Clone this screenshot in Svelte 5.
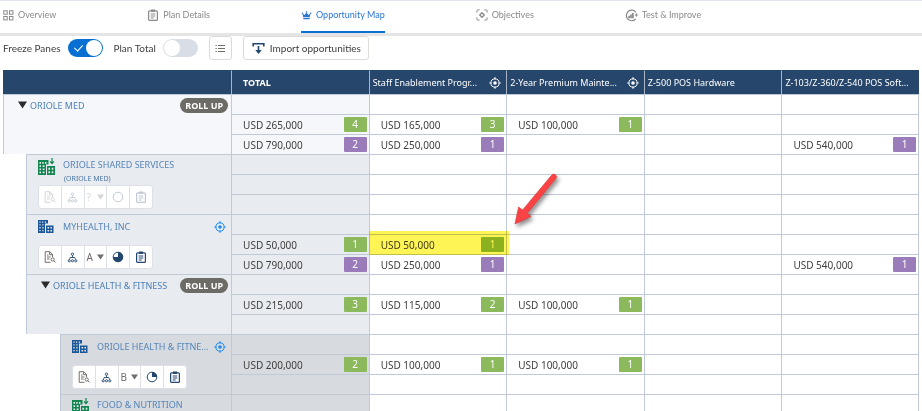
<script>
  const tabs = [
    { label: 'Overview', icon: 'grid' },
    { label: 'Plan Details', icon: 'clipboard' },
    { label: 'Opportunity Map', icon: 'crown', active: true },
    { label: 'Objectives', icon: 'focus' },
    { label: 'Test & Improve', icon: 'chart' }
  ];

  const columns = [
    { label: 'Staff Enablement Progr...', target: true },
    { label: '2-Year Premium Mainte...', target: true },
    { label: 'Z-500 POS Hardware' },
    { label: 'Z-103/Z-360/Z-540 POS Soft...' }
  ];

  const G = 'green';
  const P = 'purple';
  const none = [null, null, null, null, null];

  // Every account spans three rows; each row holds [amount, count, colour] per column.
  const groups = [
    {
      level: 0, name: 'ORIOLE MED', rollup: true,
      rows: [
        none,
        [['265,000', 4, G], ['165,000', 3, G], ['100,000', 1, G], null, null],
        [['790,000', 2, P], ['250,000', 1, P], null, null, ['540,000', 1, P]]
      ]
    },
    {
      level: 1, name: 'ORIOLE SHARED SERVICES', sub: '(ORIOLE MED)', shared: true,
      disabled: true, grade: '?', pie: 0, rows: [none, none, none]
    },
    {
      level: 1, name: 'MYHEALTH, INC', target: true, grade: 'A', pie: 75,
      rows: [
        none,
        [['50,000', 1, G], ['50,000', 1, G, true], null, null, null],
        [['790,000', 2, P], ['250,000', 1, P], null, null, ['540,000', 1, P]]
      ]
    },
    {
      level: 1, name: 'ORIOLE HEALTH & FITNESS', rollup: true,
      rows: [
        none,
        [['215,000', 3, G], ['115,000', 2, G], ['100,000', 1, G], null, null],
        none
      ]
    },
    {
      level: 2, name: 'ORIOLE HEALTH & FITNE...', target: true, grade: 'B', pie: 25,
      rows: [
        none,
        [['200,000', 2, G], ['100,000', 1, G], ['100,000', 1, G], null, null],
        none
      ]
    },
    {
      level: 2, name: 'FOOD & NUTRITION', sub: ' ', shared: true,
      grade: '?', pie: 0, rows: [none, none, none]
    }
  ];
</script>

{#snippet clipboard(size)}
  <svg width={size} height={size} viewBox="0 0 12 12" fill="none" stroke="currentColor" stroke-width="1.2">
    <rect x="1.6" y="1.8" width="8.8" height="9.6" rx="1" />
    <rect x="4" y="0.5" width="4" height="2.4" fill="currentColor" stroke="none" />
    <path d="M3.7 5h4.6M3.7 7h4.6M3.7 9h3" stroke-width="1" />
  </svg>
{/snippet}

{#snippet target()}
  <svg width="12" height="12" viewBox="0 0 12 12" fill="none" stroke="currentColor">
    <circle cx="6" cy="6" r="4.1" />
    <circle cx="6" cy="6" r="1.8" fill="currentColor" stroke="none" />
    <path d="M6 .3v2M6 9.7v2M.3 6h2M9.7 6h2" stroke-width="1.2" />
  </svg>
{/snippet}

{#snippet tabIcon(name)}
  {#if name === 'grid'}
    <svg width="11" height="11" viewBox="0 0 11 11" fill="none" stroke="currentColor">
      <rect x=".8" y=".8" width="3.4" height="3.4" /><rect x="6.5" y=".8" width="3.4" height="3.4" />
      <rect x=".8" y="6.5" width="3.4" height="3.4" /><rect x="6.5" y="6.5" width="3.4" height="3.4" />
    </svg>
  {:else if name === 'clipboard'}
    {@render clipboard(12)}
  {:else if name === 'crown'}
    <svg width="11" height="11" viewBox="0 0 11 11" fill="currentColor">
      <path d="M1.5 3.4 3.7 5 5.5 2.2 7.3 5 9.5 3.4 8.8 7.3H2.2zM2.3 8h6.4v1.3H2.3z" />
      <circle cx="1.4" cy="3.2" r=".8" /><circle cx="5.5" cy="2" r=".8" /><circle cx="9.6" cy="3.2" r=".8" />
    </svg>
  {:else if name === 'focus'}
    <svg width="12" height="12" viewBox="0 0 12 12" fill="none" stroke="currentColor">
      <path d="M.9 3.6V1.9q0-1 1-1h1.7M8.4.9h1.7q1 0 1 1v1.7M11.1 8.4v1.7q0 1-1 1H8.4M3.6 11.1H1.9q-1 0-1-1V8.4" />
      <path d="M6 3.7 8.3 6 6 8.3 3.7 6z" stroke-width="1.3" />
    </svg>
  {:else}
    <svg width="13" height="13" viewBox="0 0 13 13" fill="none" stroke="currentColor">
      <path d="M10.9 3.3A5.3 5.3 0 1 0 10.6 10M11.5 4.5v1.5" stroke-width="1.2" />
      <path d="M9.8 5.6h3.2L11.4 8z" fill="currentColor" stroke="none" />
      <path d="M4.1 9.3V6.8M6 9.3V5.4M7.9 9.3V4" stroke-width="1.7" />
    </svg>
  {/if}
{/snippet}

{#snippet building(shared)}
  <svg class={shared ? 'bldg shared' : 'bldg'} width="18" height="17" viewBox="0 0 18 17">
    {#if shared}
      <path fill="currentColor" d="M0 2h10.5v4.5H8V17H0zM9 8h8v9H9z" />
      <path d="M14 0v5M12 3.4l2 2.200 2-2.200" fill="none" stroke="currentColor" stroke-width="1.2" />
      <path class="win" d="M1.500 4h1.500v1.700H1.500zM4.200 4h1.500v1.700H4.200zM7 4h1.500v1.700H7zM1.500 7.200h1.500v1.700H1.500zM4.700 7.200h1.800v1.700H4.700zM1.500 10.400h1.500v1.700H1.500zM4.700 10.400h1.800v1.700H4.700zM1.500 13.600h1.500v1.700H1.500zM4.700 13.600h1.800v1.700H4.700zM10.400 9.700H12v2h-1.600zM13.700 9.700h1.600v2h-1.600zM10.400 13.300H12v2h-1.600zM13.700 13.300h1.600v2h-1.600z" />
    {:else}
      <path fill="currentColor" d="M0 2h10v3.500H7V15H0zM8 7.500h7.500V15H8z" />
      <path class="win" d="M1.400 3.500h1.200v1.300H1.400zM4 3.500h1.200v1.300H4zM6.800 3.500H8v1.300H6.800zM1.400 6.300h1.200v1.300H1.400zM4.300 6.300h1.200v1.300H4.300zM1.400 9.100h1.200v1.300H1.400zM4.300 9.100h1.200v1.300H4.300zM1.400 12h1.200v1.300H1.400zM4.300 12h1.200v1.300H4.300zM9.500 9h1.600v1.600H9.500zM12.400 9H14v1.600h-1.600zM9.500 12h1.600v1.600H9.500zM12.400 12H14v1.600h-1.600z" />
    {/if}
  </svg>
{/snippet}

{#snippet actions(g)}
  <div class="actions" class:dim={g.disabled}>
    <button type="button" class="grey" aria-label="Account notes">
      <svg width="12" height="12" viewBox="0 0 12 12" fill="none" stroke="currentColor">
        <path d="M6.500 11.300H1.200V.7h4.600l2.700 2.700v2.800M5.600.8v2.900h2.900M3 4h1.500M3 6h3.500M3 8h2.500" />
        <circle cx="8.700" cy="8.500" r="1.600" /><path d="m9.900 9.700 1.700 1.800" />
      </svg>
    </button>
    <button type="button" aria-label="Hierarchy">
      <svg width="11" height="11" viewBox="0 0 11 11" fill="none" stroke="currentColor" stroke-width=".9">
        <circle cx="5.500" cy="2.200" r="1.200" /><path d="M5.500 3.400v2M2.500 7.500 3.200 5.500h4.600l.7 2" />
        <circle cx="2.200" cy="8.800" r="1.100" /><circle cx="5.500" cy="8.800" r="1.100" /><circle cx="8.800" cy="8.800" r="1.100" />
      </svg>
    </button>
    <span class="grade">
      <select aria-label="Grade of {g.name}"><option>{g.grade}</option></select>
      <svg width="7" height="6" viewBox="0 0 7 6"><path d="M0 .5h7L3.500 5.500z" fill="currentColor" /></svg>
    </span>
    <button type="button" aria-label="Progress">
      <svg width="12" height="12" viewBox="0 0 12 12">
        <circle cx="6" cy="6" r="4.800" fill="none" stroke="currentColor" />
        {#if g.pie === 75}
          <path d="M6 6H1a5 5 0 1 0 5-5z" fill="currentColor" />
        {:else if g.pie === 25}
          <path d="M6 6V1a5 5 0 0 1 5 5z" fill="currentColor" />
        {/if}
      </svg>
    </button>
    <button type="button" aria-label="Plan">{@render clipboard(12)}</button>
  </div>
{/snippet}

<div class="page">
  <nav>
    {#each tabs as t}
      <a href="#{t.icon}" class:active={t.active}>{@render tabIcon(t.icon)}<span>{t.label}</span></a>
    {/each}
  </nav>

  <div class="toolbar">
    <label>Freeze Panes <input type="checkbox" checked /></label>
    <label>Plan Total <input type="checkbox" /></label>
    <button type="button" class="tool list" aria-label="List view">
      <svg width="10" height="9" viewBox="0 0 10 9" fill="none" stroke="currentColor">
        <path d="M3 1.500h7M3 4.500h7M3 7.500h7M.5 1.500h1.300M.5 4.500h1.300M.5 7.500h1.300" stroke-width="1.100" />
      </svg>
    </button>
    <button type="button" class="tool import">
      <svg width="13" height="13" viewBox="0 0 13 13" fill="none" stroke="#23466c" stroke-width="1.600">
        <path d="M1.200 4.500V1.800h10.600v2.700M6.500 4v6" /><path d="M3.300 8h6.400L6.500 12z" fill="#23466c" stroke="none" />
      </svg>
      Import opportunities
    </button>
  </div>

  <table>
    <thead>
      <tr>
        <th class="first"></th>
        <th class="total">TOTAL</th>
        {#each columns as c}
          <th><div class="head"><span>{c.label}</span>{#if c.target}{@render target()}{/if}</div></th>
        {/each}
      </tr>
    </thead>
    <tbody>
      {#each groups as g}
        {#each g.rows as row, r}
          <tr>
            {#if r === 0}
              <td class="account" rowspan="3">
                <div class="node level{g.level}">
                  {#if g.rollup}
                    <div class="title roll">
                      <svg width="9" height="8" viewBox="0 0 9 8"><path d="M0 .5h9L4.500 7.500z" fill="#2b2b2b" /></svg>
                      <a href="#account">{g.name}</a>
                      <span class="pill">ROLL UP</span>
                    </div>
                  {:else}
                    <div class="title">
                      {@render building(g.shared)}
                      <div class="names" class:high={g.sub}>
                        <a href="#account">{g.name}</a>
                        {#if g.sub}<small>{g.sub}</small>{/if}
                      </div>
                      {#if g.target}<span class="aim">{@render target()}</span>{/if}
                    </div>
                    {@render actions(g)}
                  {/if}
                </div>
              </td>
            {/if}
            {#each row as cell, c}
              <td class={c === 0 ? `shade${g.level}` : ''}>
                {#if cell}
                  <div class="cell">
                    <span>USD {cell[0]}</span><b class={cell[2]}>{cell[1]}</b>
                    {#if cell[3]}
                      <i class="marker"></i>
                      <svg class="arrow" width="56" height="64" viewBox="0 0 56 64">
                        <path d="M43.600 3.200a2.700 2.700 0 0 1 4.300 3.400L19.300 41.200l3.700 3.300L7 52l3.600-17 4 3z" fill="#fb4245" stroke="#dc3438" stroke-width=".6" />
                      </svg>
                    {/if}
                  </div>
                {/if}
              </td>
            {/each}
          </tr>
        {/each}
      {/each}
    </tbody>
  </table>
</div>

<style>
  :global(body) { margin: 0; background: #fff; }
  .page {
    height: 100vh;
    overflow: hidden;
    box-sizing: border-box;
    border-top: 1px solid #dfe3ed;
    font: 10px/14px "Noto Sans", "Open Sans", sans-serif;
    color: #3e3e3c;
  }
  .page * { box-sizing: border-box; }
  svg { display: block; flex: none; }
  a { color: inherit; text-decoration: none; }
  button, select, input { font: inherit; color: inherit; margin: 0; padding: 0; }

  nav {
    display: flex;
    gap: 91px;
    height: 35px;
    padding: 0 3px;
    border-bottom: 3px solid #e5e5e5;
    color: #8a8a8a;
    font-family: Lato, sans-serif;
    font-size: 9px;
  }
  nav a { display: flex; align-items: center; gap: 4px; height: 32px; padding-bottom: 2px; border-bottom: 2px solid transparent; white-space: nowrap; }
  nav a.active { color: #2b76d2; border-color: #0b70d4; }

  .toolbar { display: flex; align-items: center; height: 34px; padding: 0 3px 10px; font-family: Lato, sans-serif; }
  .toolbar label { display: flex; align-items: center; gap: 7px; margin-right: 11px; white-space: nowrap; }
  input {
    appearance: none;
    position: relative;
    width: 35px;
    height: 18px;
    border-radius: 9px;
    background: #d8dde6;
  }
  input::before {
    content: '';
    position: absolute;
    top: 1px;
    left: 1px;
    width: 16px;
    height: 16px;
    border-radius: 8px;
    background: #fff;
  }
  input:checked { background: #0870d2; }
  input:checked::before { left: 18px; }
  input:checked::after {
    content: '';
    position: absolute;
    left: 8px;
    top: 4px;
    width: 4px;
    height: 7px;
    border: solid #fff;
    border-width: 0 1px 1px 0;
    transform: rotate(42deg);
  }
  .tool {
    display: flex;
    align-items: center;
    justify-content: center;
    height: 24px;
    border: 1px solid #dddbda;
    border-radius: 3px;
    background: #fff;
  }
  .list { width: 23px; color: #706e6b; }
  .import { gap: 5px; margin-left: 11px; padding: 0 7px 0 8px; }

  table { width: calc(100% - 6px); margin: 0 3px; border-spacing: 0; table-layout: fixed; }
  th, td { height: 20px; padding: 0; border: solid #c0c9d6; border-width: 1px 0 0 1px; text-align: left; font-weight: 400; }
  td:last-child { border-right-width: 1px; }
  th { height: 24px; padding-left: 3px; border-color: #23466c #a9b5c4; background: #27466c; color: #fff; font-size: 9px; }
  th.first { width: 24.9%; border-left-color: #27466c; }
  th.total { padding-left: 11px; font-weight: 700; }
  .head { display: flex; align-items: center; justify-content: space-between; white-space: nowrap; }
  .head svg { margin-right: 5px; }

  .account { border: 0; }
  .node { height: 60px; border: solid #c0c9d6; border-width: 1px 0 0 1px; color: #5585b8; }
  .level0, .shade0 { background: #f5f7fb; }
  .level1, .shade1 { background: #e8ebf0; }
  .level2, .shade2 { background: #d7dadf; }
  .level1 { margin-left: 23px; }
  .level2 { margin-left: 57px; }
  .title { display: flex; gap: 7px; height: 30px; padding: 3px 5px 0 11px; font-size: 9px; line-height: 14px; }
  .roll { gap: 3px; padding: 3px 3px 0 14px; line-height: 16px; }
  .roll svg { margin-top: 3px; }
  .roll a { flex: 1; white-space: nowrap; color: #4c80b6; }
  .pill { height: 15px; padding: 0 5px; border-radius: 8px; background: #6d6b66; color: #fff; line-height: 15px; font-weight: 700; white-space: nowrap; }
  .names { display: flex; flex-direction: column; flex: 1; min-width: 0; padding-top: 2px; white-space: nowrap; }
  .names.high { padding-top: 0; }
  small { padding-left: 1px; font-size: 7px; line-height: 14px; color: #4c76a8; }
  .bldg { color: #1d5797; }
  .bldg.shared { color: #128550; }
  .win { fill: #e8ebf0; }
  .aim { padding-top: 3px; color: #1b8bf0; }

  .actions { display: flex; width: 115px; height: 24px; margin-left: 11px; border: 1px solid #dde0e6; border-radius: 3px; background: #fff; color: #23466c; }
  .actions button, .grade { display: flex; flex: 1 1 0; align-items: center; justify-content: center; border: 0; background: none; }
  .actions > * + *, .actions > button + button { border-left: 1px solid #dde0e6; }
  .actions > .grade + button { border-left: 1px solid #dde0e6; }
  .actions .grey, .grade { color: #706e6b; }
  .grade { gap: 3px; }
  .grade select { appearance: none; width: 8px; border: 0; background: none; }
  .dim > * > :global(*) { opacity: .28; }

  .cell { position: relative; display: flex; align-items: center; justify-content: space-between; height: 19px; padding: 0 2px 0 11px; white-space: nowrap; }
  .cell b { width: 23px; height: 15px; border-radius: 1px; color: #fff; line-height: 15px; text-align: center; font-weight: 400; }
  .green { background: #8bb95c; }
  .purple { background: #9b7cba; }
  .marker { position: absolute; left: -1px; right: -3px; top: -4px; height: 24px; background: #fff456; mix-blend-mode: multiply; }
  .arrow { position: absolute; left: 138px; bottom: 18px; filter: drop-shadow(2px 3px 2px rgba(0, 0, 0, .45)); }
</style>
